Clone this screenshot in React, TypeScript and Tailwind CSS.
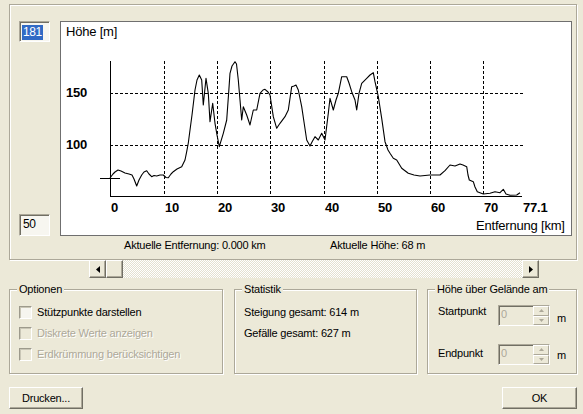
import React from "react";

const PTS: [number, number][] = [
  [110, 178], [113, 174], [115, 172], [118, 170], [121, 171], [125, 173], [129, 174], [132, 175], [134, 179], [136.7, 186],
  [139, 180], [141.7, 175], [144, 172], [146.7, 170.7], [149, 174], [151.7, 176.7], [154, 175.5], [156.7, 176], [160, 175],
  [163.3, 175], [166, 177.5], [168.3, 177.7], [171, 174], [173.3, 171.7], [177, 169], [181.7, 166.7], [185, 160],
  [186.7, 151.7], [188.3, 143], [190, 130], [192, 115], [195, 90], [197, 80], [199.3, 75], [201.7, 80], [203.3, 105],
  [206, 78.3], [208.3, 93.3], [210, 121.7], [212.7, 103.3], [215, 123.3], [217, 135], [219.3, 146.7], [223.3, 133.3],
  [226.7, 120], [228.5, 95], [230, 73.3], [232, 66], [235, 61.7], [236.5, 64], [238.3, 80], [240, 100], [241.7, 120],
  [243.3, 106.7], [246.7, 115], [250, 125], [253.3, 110], [256.7, 110], [260, 93.3], [263, 90], [265, 89.3], [268, 92],
  [270, 95], [273.3, 116.7], [276.7, 128.3], [280, 123.3], [285, 116.7], [288.3, 110], [291.7, 86.7], [294, 86], [296, 85],
  [298.3, 90], [301.7, 106.7], [304, 122], [306.7, 140], [310, 146], [312, 142], [315, 136.7], [318.3, 140], [321.7, 133.3],
  [325, 140], [328.3, 113.3], [330, 98.3], [333.3, 110], [336, 100], [338.3, 93.3], [341.7, 76.7], [346.7, 76.7],
  [349, 83], [351.7, 91.7], [355, 100], [356.7, 110], [359, 93.3], [361.7, 83.3], [366.7, 78.3], [370, 75], [373.3, 72.7],
  [375, 81.7], [378.3, 96.7], [381.7, 118.3], [385, 141.7], [388, 150], [390, 153.3], [393.3, 158.3], [396.7, 160],
  [401.7, 168.3], [408.3, 173.3], [414, 175], [420, 176], [430, 175], [440, 175], [445, 170.7], [450, 165], [455, 166],
  [460, 164], [463, 165], [466.7, 166.7], [468, 175], [469.3, 180], [473.3, 181.7], [475, 187], [477.3, 191.7],
  [483.3, 194], [490, 193.3], [495, 191.7], [500, 192.7], [503.3, 189.3], [506, 194], [510, 195.3], [516.7, 195],
  [520, 192.7],
];

const VGRID = [164, 217, 270, 324, 377, 430, 483];
const XLABELS: [number, string][] = [
  [111, "0"], [165, "10"], [218, "20"], [271, "30"], [325, "40"], [378, "50"], [431, "60"], [484, "70"], [523, "77.1"],
];

const FONT = "'Liberation Sans', Arial, sans-serif";

function Chart() {
  return (
    <svg width={510} height={213} viewBox="61 22 510 213" className="block">
      <text x={66} y={36} fontFamily={FONT} fontSize={13} fill="#000">Höhe [m]</text>
      <text x={476} y={229.5} fontFamily={FONT} fontSize={13} fill="#000">Entfernung [km]</text>
      <text x={66} y={96.5} fontFamily={FONT} fontSize={13} fontWeight="bold" fill="#000">150</text>
      <text x={66} y={148.5} fontFamily={FONT} fontSize={13} fontWeight="bold" fill="#000">100</text>
      {XLABELS.map(([x, t]) => (
        <text key={t} x={x} y={211.5} fontFamily={FONT} fontSize={13} fontWeight="bold" fill="#000">{t}</text>
      ))}
      <g stroke="#000" strokeWidth={1} strokeDasharray="3 2" shapeRendering="crispEdges">
        <line x1={110} y1={93.5} x2={523} y2={93.5} />
        <line x1={110} y1={145.5} x2={523} y2={145.5} />
        {VGRID.map((x) => (
          <line key={x} x1={x + 0.5} y1={61} x2={x + 0.5} y2={196} />
        ))}
      </g>
      <g stroke="#000" strokeWidth={1} shapeRendering="crispEdges">
        <line x1={110.5} y1={61} x2={110.5} y2={197} />
        <line x1={110} y1={196.5} x2={522} y2={196.5} />
        <line x1={100} y1={178.5} x2={120} y2={178.5} />
      </g>
      <polyline
        points={PTS.map((p) => p.join(",")).join(" ")}
        fill="none"
        stroke="#000"
        strokeWidth={1.1}
        strokeLinejoin="round"
      />
    </svg>
  );
}

function Arrow({ dir }: { dir: "left" | "right" }) {
  return (
    <svg width={4} height={7} viewBox="0 0 4 7" className="block">
      {dir === "left" ? <path d="M4 0 L0 3.5 L4 7 Z" fill="#000" /> : <path d="M0 0 L4 3.5 L0 7 Z" fill="#000" />}
    </svg>
  );
}

const raised =
  "bg-[#ece9d8] border border-t-white border-l-white border-r-[#716f64] border-b-[#716f64] shadow-[inset_-1px_-1px_0_#aca899]";
const sunken =
  "border border-t-[#aca899] border-l-[#aca899] border-r-white border-b-white shadow-[inset_1px_1px_0_#716f64]";

function Checkbox({ label, disabled }: { label: string; disabled?: boolean }) {
  return (
    <div className="flex items-center h-[13px]">
      <div
        className={`w-[13px] h-[13px] border border-t-[#9d9a8c] border-l-[#9d9a8c] border-r-white border-b-white shadow-[inset_1px_1px_0_#c9c6b6] ${
          disabled ? "bg-[#ece9d8]" : "bg-[#f6f5ef]"
        }`}
      />
      <span
        className={`ml-[5px] leading-[13px] ${
          disabled ? "text-[#aca899] [text-shadow:1px_1px_0_#fff]" : "text-black"
        }`}
      >
        {label}
      </span>
    </div>
  );
}

function Spin() {
  return (
    <div className={`w-[52px] h-[21px] flex bg-[#ece9d8] ${sunken}`}>
      <span className="flex-1 pl-[2px] leading-[17px] text-[#aca899]">0</span>
      <div className="w-[16px] flex flex-col">
        <div className="flex-1 flex items-center justify-center border border-t-white border-l-white border-r-[#aca899] border-b-[#aca899]">
          <svg width={5} height={3} viewBox="0 0 5 3"><path d="M0 3 L2.5 0 L5 3 Z" fill="#aca899" /></svg>
        </div>
        <div className="flex-1 flex items-center justify-center border border-t-white border-l-white border-r-[#aca899] border-b-[#aca899]">
          <svg width={5} height={3} viewBox="0 0 5 3"><path d="M0 0 L2.5 3 L5 0 Z" fill="#aca899" /></svg>
        </div>
      </div>
    </div>
  );
}

const fieldset =
  "border border-[#aca899] shadow-[inset_1px_1px_0_#fff,1px_1px_0_#fff] h-[91px] m-0 p-0";
const legend = "ml-[7px] px-[2px] leading-[13px] bg-[#ece9d8]";

export default function App() {
  return (
    <div
      className="w-[583px] h-[414px] bg-[#ece9d8] overflow-hidden flex flex-col pt-[4px] text-[11px] tracking-[-0.2px] text-black"
      style={{ fontFamily: FONT }}
    >
      {/* top panel */}
      <div className="ml-[9px] w-[568px] h-[256px] border border-[#aca899] shadow-[inset_1px_1px_0_#fff,1px_1px_0_#fff] flex flex-col">
        <div className="flex mt-[16px]">
          <div className="w-[50px] pl-[9px] h-[215px] flex flex-col justify-between">
            <div className={`w-[31px] h-[21px] bg-[#f7f6f0] ${sunken} pl-[2px] pt-[2px]`}>
              <span className="inline-block bg-[#316ac5] text-white text-[12px] leading-[15px] px-[1px] tracking-[-0.4px]">181</span>
            </div>
            <div className={`w-[31px] h-[22px] bg-[#f7f6f0] ${sunken} pl-[3px] text-[12px] leading-[19px] tracking-[-0.4px]`}>
              50
            </div>
          </div>
          <div className="w-[512px] h-[215px] bg-white border border-[#6f6f6f]">
            <Chart />
          </div>
        </div>
        <div className="flex mt-[3px] leading-[13px]">
          <span className="ml-[114px] w-[206px]">Aktuelle Entfernung: 0.000 km</span>
          <span>Aktuelle Höhe: 68 m</span>
        </div>
      </div>

      {/* scrollbar */}
      <div className="ml-[89px] w-[450px] h-[18px] flex">
        <div className={`w-[17px] h-[18px] flex items-center justify-center ${raised}`}>
          <Arrow dir="left" />
        </div>
        <div className={`w-[17px] h-[18px] ${raised}`} />
        <div className="flex-1 h-[18px] bg-[repeating-conic-gradient(#ffffff_0_25%,#e4e1d0_0_50%)] bg-[length:2px_2px]" />
        <div className={`w-[17px] h-[18px] flex items-center justify-center ${raised}`}>
          <Arrow dir="right" />
        </div>
      </div>

      {/* group boxes */}
      <div className="flex ml-[9px] mt-[5px]">
        <fieldset className={`${fieldset} w-[214px]`}>
          <legend className={legend}>Optionen</legend>
          <div className="flex flex-col gap-[8px] pl-[9px] pt-[10px]">
            <Checkbox label="Stützpunkte darstellen" />
            <Checkbox label="Diskrete Werte anzeigen" disabled />
            <Checkbox label="Erdkrümmung berücksichtigen" disabled />
          </div>
        </fieldset>
        <fieldset className={`${fieldset} w-[183px] ml-[11px]`}>
          <legend className={legend}>Statistik</legend>
          <div className="flex flex-col gap-[8px] pl-[9px] pt-[10px] leading-[13px]">
            <span>Steigung gesamt: 614 m</span>
            <span>Gefälle gesamt: 627 m</span>
          </div>
        </fieldset>
        <fieldset className={`${fieldset} w-[150px] ml-[10px]`}>
          <legend className={legend}>Höhe über Gelände am</legend>
          <div className="flex flex-col pl-[10px] pt-[9px] leading-[13px]">
            <div className="flex items-start">
              <span className="w-[60px] mt-[0px]">Startpunkt</span>
              <Spin />
              <span className="ml-[7px] mt-[7px]">m</span>
            </div>
            <div className="flex items-start mt-[18px]">
              <span className="w-[60px] mt-[3px]">Endpunkt</span>
              <Spin />
              <span className="ml-[7px] mt-[5px]">m</span>
            </div>
          </div>
        </fieldset>
      </div>

      {/* buttons */}
      <div className="flex mt-[13px] ml-[9px]">
        <button className={`w-[74px] h-[22px] ${raised} leading-[18px] text-center`}>Drucken...</button>
        <button className={`w-[75px] h-[22px] ml-[419px] ${raised} leading-[18px] text-center`}>OK</button>
      </div>
    </div>
  );
}
